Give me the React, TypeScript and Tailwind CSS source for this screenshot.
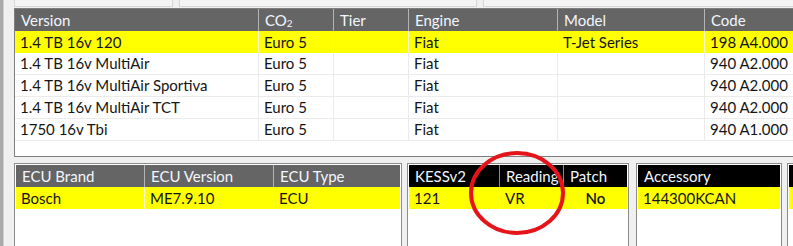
import React from "react"

type Col = { label: React.ReactNode; w: string; align?: "center"; bold?: boolean }

const topCols: Col[] = [
  { label: "Version", w: "w-[243px]" },
  { label: <>CO<sub className="text-[10px]">2</sub></>, w: "w-[75px]" },
  { label: "Tier", w: "w-[75px]" },
  { label: "Engine", w: "w-[149px]" },
  { label: "Model", w: "w-[147px]" },
  { label: "Code", w: "w-[120px]" },
]

const versions = [
  ["1.4 TB 16v 120", "Euro 5", "", "Fiat", "T-Jet Series", "198 A4.000"],
  ["1.4 TB 16v MultiAir", "Euro 5", "", "Fiat", "", "940 A2.000"],
  ["1.4 TB 16v MultiAir Sportiva", "Euro 5", "", "Fiat", "", "940 A2.000"],
  ["1.4 TB 16v MultiAir TCT", "Euro 5", "", "Fiat", "", "940 A2.000"],
  ["1750 16v Tbi", "Euro 5", "", "Fiat", "", "940 A1.000"],
]

function HeaderRow({ cols, dark }: { cols: Col[]; dark?: boolean }) {
  return (
    <div className={`flex h-[22px] shrink-0 ${dark ? "bg-black" : "bg-[#656565]"}`}>
      {cols.map((c, i) => (
        <div
          key={i}
          className={`${c.w} shrink-0 flex items-center px-[6px] text-[#f2f6ff] leading-none whitespace-nowrap overflow-hidden ${
            i > 0 ? (dark ? "border-l border-[#8a8a8a]" : "border-l border-[#b4b4b4]") : ""
          }`}
        >
          {c.label}
        </div>
      ))}
    </div>
  )
}

function DataRow({ cols, cells, selected }: { cols: Col[]; cells: string[]; selected?: boolean }) {
  return (
    <div
      className={`flex h-[22px] shrink-0 ${
        selected ? "bg-[#ffff00]" : "bg-white border-b border-[#ebebeb]"
      }`}
    >
      {cells.map((t, i) => (
        <div
          key={i}
          className={`${cols[i].w} shrink-0 flex items-center px-[5px] text-[#151515] leading-none whitespace-nowrap overflow-hidden ${
            cols[i].align === "center" ? "justify-center" : ""
          } ${cols[i].bold ? "font-semibold" : ""} ${
            i > 0 ? (selected ? "border-l border-[#fafad2]" : "border-l border-[#ebebeb]") : ""
          }`}
        >
          {t}
        </div>
      ))}
    </div>
  )
}

function Panel({
  cols,
  cells,
  dark,
  className,
}: {
  cols: Col[]
  cells: string[]
  dark?: boolean
  className: string
}) {
  return (
    <div className={`${className} shrink-0 h-[90px] border border-[#8c8c8c] bg-white p-px flex flex-col`}>
      <HeaderRow cols={cols} dark={dark} />
      <DataRow cols={cols} cells={cells} selected />
    </div>
  )
}

export default function App() {
  return (
    <div
      className="relative w-[793px] h-[246px] overflow-hidden bg-[#f0f0f0] text-[15px] flex"
      style={{ fontFamily: "Lato, 'Open Sans', sans-serif" }}
    >
      {/* left splitter strip */}
      <div className="w-[4px] shrink-0 bg-[#a9a9a9] border-r border-[#d0d0d0]" />

      <div className="flex-1 flex flex-col pl-[10px] overflow-hidden">
        {/* tab strip remnants */}
        <div className="flex h-[7px] shrink-0 gap-[6px]">
          <div className="w-[159px] border-b border-[#9a9a9a] border-x border-[#d6d6d6] bg-[#f4f4f4]" />
          <div className="w-[298px] border-b border-[#9a9a9a] border-x border-[#d6d6d6] bg-[#f4f4f4]" />
          <div className="flex-1 border-b border-[#9a9a9a] border-l border-[#d6d6d6] bg-[#f4f4f4]" />
        </div>

        {/* versions table */}
        <div className="mt-px h-[149px] w-[860px] shrink-0 border border-[#7f7f7f] bg-white flex flex-col">
          <HeaderRow cols={topCols} />
          {versions.map((r, i) => (
            <DataRow key={i} cols={topCols} cells={r} selected={i === 0} />
          ))}
        </div>

        {/* lower panels */}
        <div className="mt-[6px] flex gap-[5px]">
          <Panel
            className="w-[388px]"
            cols={[
              { label: "ECU Brand", w: "w-[128px]" },
              { label: "ECU Version", w: "w-[129px]" },
              { label: "ECU Type", w: "w-[127px]" },
            ]}
            cells={["Bosch", "ME7.9.10", "ECU"]}
          />
          <Panel
            className="w-[222px]"
            dark
            cols={[
              { label: "KESSv2", w: "w-[90px]" },
              { label: "Reading", w: "w-[64px]" },
              { label: "Patch", w: "w-[64px]", align: "center", bold: true },
            ]}
            cells={["121", "VR", "No"]}
          />
          <Panel
            className="w-[146px] ml-[2px]"
            dark
            cols={[{ label: "Accessory", w: "w-[142px]" }]}
            cells={["144300KCAN"]}
          />
          <Panel
            className="w-[120px]"
            dark
            cols={[{ label: "", w: "w-[116px]" }]}
            cells={["1"]}
          />
        </div>
      </div>

      {/* red marker circle */}
      <svg className="absolute left-[468px] top-[150px]" width="98" height="86" viewBox="0 0 98 86">
        <ellipse cx="49" cy="43" rx="46" ry="40" fill="none" stroke="#e5141b" strokeWidth="4" />
      </svg>
    </div>
  )
}
